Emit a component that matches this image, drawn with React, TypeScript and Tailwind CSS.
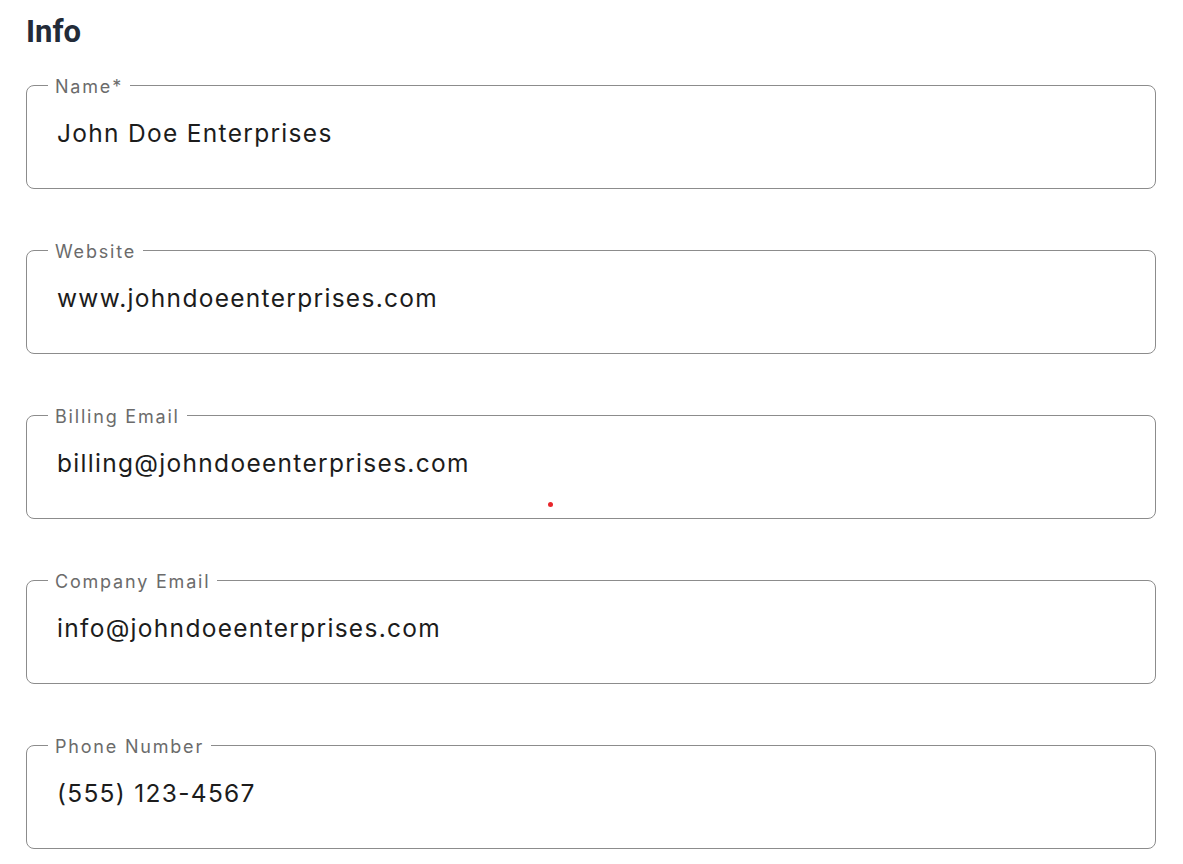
import React from "react";

const fields = [
  { label: "Name*", value: "John Doe Enterprises" },
  { label: "Website", value: "www.johndoeenterprises.com" },
  { label: "Billing Email", value: "billing@johndoeenterprises.com" },
  { label: "Company Email", value: "info@johndoeenterprises.com" },
  { label: "Phone Number", value: "(555) 123-4567" },
];

export default function App() {
  return (
    <div className="relative min-h-screen bg-white px-[26px] pt-[14px]">
      <h1
        className="text-[31px] leading-[36px] font-bold text-[#232b38]"
        style={{ fontFamily: "Roboto, sans-serif" }}
      >
        Info
      </h1>
      <div className="mt-[23px] flex flex-col gap-[49px]" style={{ fontFamily: "Inter, sans-serif" }}>
        {fields.map((f) => (
          <fieldset key={f.label} className="rounded-lg border border-[#8c8c8c] w-[1130px]">
            <legend className="ml-[21px] px-[7px] pt-[4px] text-[18px] leading-5 tracking-[1.8px] text-[#6b6b6b]">
              {f.label}
            </legend>
            <div className="h-[91px] pl-[30px] pt-[20px] text-[24.5px] leading-8 tracking-[1.3px] text-[#1c1c1c]">
              {f.value}
            </div>
          </fieldset>
        ))}
      </div>
      <div className="absolute left-[548px] top-[502px] h-[5px] w-[5px] rounded-full bg-[#e8262b]" />
    </div>
  );
}
